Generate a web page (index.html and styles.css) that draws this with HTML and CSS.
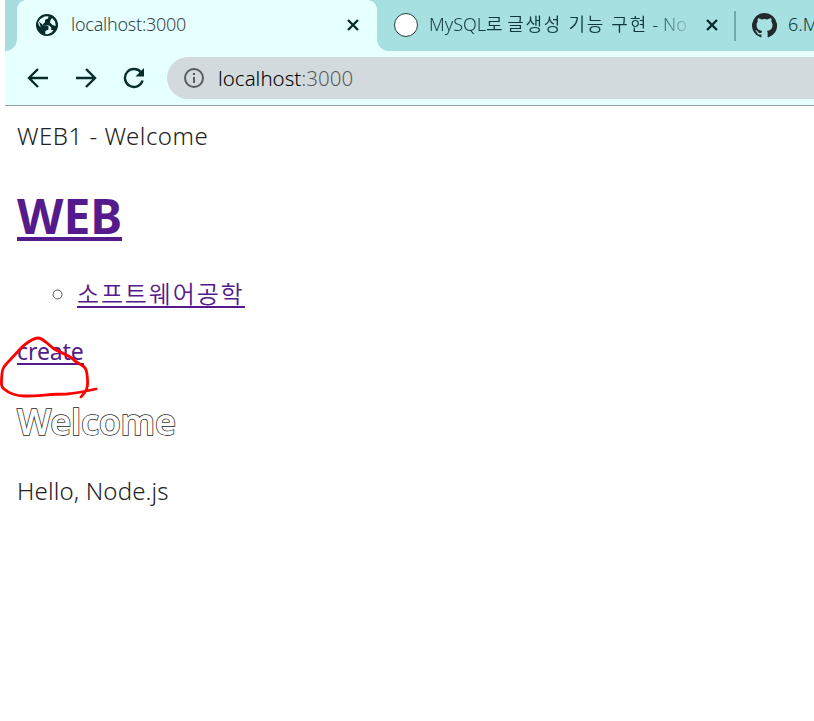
FILE: index.html
```html
<!DOCTYPE html>
<html lang="ko">
<head>
<meta charset="utf-8">
<title>WEB1 - Welcome</title>
<link rel="stylesheet" href="styles.css">
</head>
<body>
<header class="browser">
  <div class="tabs">
    <div class="edge"></div>
    <div class="tab active">
      <svg class="globe" viewBox="0 0 24 24"><circle cx="12" cy="12" r="11" fill="#062c2b"/><path fill="#eaffff" d="M9.500 3.500l4-.3L13 5.500l-3 1.200v2.500L8 11v1.500h6l2.200 2V17h2.300l-2 2.500-4 1.700-2.200-.2v-3l-3-2.500L4 12.500l-1-3 2-3.300zM17 5l3 3.500.8 4.500-3.300-1-2.500-2.500.5-2.300z"/><path fill="#062c2b" d="M4 8.500l4.500 4 1.500-.3 3.500 1.300v3L10.500 18l-4-1z"/></svg>
      <span class="title t1">localhost:3000</span>
      <svg class="close" viewBox="0 0 14 14"><path d="M2 2l10 10M12 2 2 12"/></svg>
    </div>
    <div class="tab second">
      <span class="blank-icon"></span>
      <span class="title t2">MySQL로 <span class="ko">글생성 기능 구현</span> - No</span>
      <svg class="close" viewBox="0 0 14 14"><path d="M2 2l10 10M12 2 2 12"/></svg>
    </div>
    <div class="tab third">
      <svg class="github" viewBox="0 0 16 16"><path d="M8 0a8 8 0 0 0-2.53 15.59c.4.07.55-.17.55-.38v-1.49c-2.01.37-2.53-.49-2.69-.94-.09-.23-.48-.94-.82-1.13-.28-.15-.68-.52-.01-.53.63-.01 1.08.58 1.23.82.72 1.21 1.87.87 2.33.66.07-.52.28-.87.51-1.07-1.78-.2-3.64-.89-3.64-3.95 0-.87.31-1.59.82-2.15-.08-.2-.36-1.02.08-2.12 0 0 .67-.21 2.2.82a7.4 7.4 0 0 1 4 0c1.53-1.04 2.2-.82 2.2-.82.44 1.1.16 1.92.08 2.12.51.56.82 1.27.82 2.15 0 3.07-1.87 3.75-3.65 3.95.29.25.54.73.54 1.48v2.2c0 .21.15.46.55.38A8 8 0 0 0 8 0z"/></svg>
      <span class="title t3">6.M</span>
    </div>
  </div>
  <div class="toolbar">
    <svg class="nav" viewBox="0 0 22 22"><path d="M21 11H2M11 2l-9 9 9 9"/></svg>
    <svg class="nav" viewBox="0 0 22 22"><path d="M1 11h19M11 2l9 9-9 9"/></svg>
    <svg class="nav" viewBox="0 0 22 22"><path d="M18.5 6A9 9 0 1 0 19.6 13.5"/><path class="solid" d="M21 1v8.5h-8.500z"/></svg>
    <div class="address">
      <svg class="info" viewBox="0 0 22 22"><circle cx="11" cy="11" r="9"/><path d="M11 10v6M11 6v2"/></svg>
      <span class="url">localhost<span class="port">:3000</span></span>
    </div>
  </div>
</header>
<main class="page">
  <p class="line intro">WEB1 - Welcome</p>
  <h1><a href="#">WEB</a></h1>
  <ul><li><a href="#">소프트웨어공학</a></li></ul>
  <p class="line create"><a href="#">create</a></p>
  <h2>Welcome</h2>
  <p class="line hello">Hello, Node.js</p>
  <svg class="scribble" viewBox="0 0 100 70"><path d="M81 67C87 61 88 57 87.500 50 87 41 86 38 83 36L75 31C70 25 60 23 53 18 46 13 43 8 38 8 32 8 27 13 22 17L10 30C4 36 2 39 2 44 1 54 1 57 4 59 10 64 15 66 24 66 40 66 50 64 67 64 78 63 87 61 96 59"/></svg>
</main>
</body>
</html>
```
FILE: styles.css
```css
* { box-sizing: border-box; }
body {
  margin: 0;
  width: 814px;
  height: 721px;
  overflow: hidden;
  background: #fff;
  font-family: "Noto Sans", "Noto Sans CJK KR", sans-serif;
  color: #000;
}
svg { display: block; flex: none; }
.browser {
  height: 106px;
  margin-left: 5px;
  background: #e6ffff;
  border-bottom: 1px solid #929e9e;
}
.tabs { display: flex; height: 51px; overflow: hidden; }
.edge {
  width: 12px;
  flex: none;
  background: #a6dcdd;
  border-bottom-right-radius: 12px;
}
.tab { display: flex; align-items: center; flex: none; }
.active {
  width: 360px;
  padding: 0 17px 0 18px;
  position: relative;
  background: #e6ffff;
}
.active::before, .active::after {
  content: "";
  position: absolute;
  top: 0;
  width: 9px;
  height: 9px;
}
.active::before { left: 0; background: radial-gradient(circle at 100% 100%, #e6ffff 8.500px, #a6dcdd 9px); }
.active::after { right: 0; background: radial-gradient(circle at 0 100%, #e6ffff 8.500px, #a6dcdd 9px); }
.second {
  width: 359px;
  padding: 0 16px 0 17px;
  background: #a6e0e0;
  border-bottom-left-radius: 12px;
  position: relative;
}
.second::after {
  content: "";
  position: absolute;
  right: 0;
  top: 11px;
  width: 2px;
  height: 30px;
  background: #74a9a5;
}
.third { width: 100px; padding-left: 16px; background: #a6e0e0; }
.globe { width: 24px; height: 24px; margin-top: -2px; }
.github { width: 25px; height: 25px; margin-top: -1px; fill: #22282c; }
.blank-icon {
  width: 24px;
  height: 24px;
  flex: none;
  margin-top: -1px;
  border: 1px solid #243c3c;
  border-radius: 50%;
  background: #fff;
}
.title {
  margin-top: -2px;
  font-size: 18px;
  line-height: 25px;
  white-space: nowrap;
  overflow: hidden;
  color: #12393a;
  font-weight: 350;
}
.t1 { margin-left: 12px; letter-spacing: -.25px; color: #334647; }
.t2 {
  width: 264px;
  margin-left: 11px;
  -webkit-mask-image: linear-gradient(90deg, #000 225px, transparent 267px);
  mask-image: linear-gradient(90deg, #000 225px, transparent 267px);
}
.ko { letter-spacing: 1.700px; }
.t3 { margin-left: 11px; }
.close { width: 14px; height: 14px; margin-left: auto; margin-top: -1px; fill: none; stroke: #062c2b; stroke-width: 2.400; }
.second .close { margin-right: 1px; }
.toolbar { display: flex; align-items: center; height: 54px; padding-left: 22px; overflow: hidden; }
.nav { width: 22px; height: 22px; margin-right: 26px; fill: none; stroke: #062c2b; stroke-width: 2.400; }
.nav .solid { fill: #062c2b; stroke: none; }
.address {
  display: flex;
  align-items: center;
  width: 660px;
  height: 42px;
  flex: none;
  margin-left: -4px;
  padding-left: 16px;
  background: #d3dadd;
  border-radius: 21px 0 0 21px;
}
.info { width: 22px; height: 22px; fill: none; stroke: #5a5a60; stroke-width: 2; }
.url { margin-left: 13px; font-size: 20.500px; font-weight: 350; }
.port { color: #5c5c60; }
.page { position: relative; padding-left: 17px; height: 615px; }
.line, h1, h2, ul { margin: 0; }
.line, ul { font-size: 24px; line-height: 32px; }
a { color: #551a8b; text-decoration: none; display: inline-block; border-bottom: 2px solid #551a8b; }
.intro, .hello { font-weight: 300; color: #222; }
.intro { padding-top: 14px; letter-spacing: .5px; }
h1 { padding-top: 32px; font-size: 48px; line-height: 64px; }
h1 a { line-height: 50px; height: 57px; padding-top: 7px; border-bottom-width: 4px; vertical-align: top; }
ul { padding: 30px 0 0 60px; list-style: circle; }
li::marker { color: #555; }
li a { letter-spacing: 1.850px; line-height: 32px; height: 30px; vertical-align: top; font-weight: 350; }
.create { padding-top: 26px; }
.create a { font-size: 23px; line-height: 31px; height: 29px; letter-spacing: -.1px; vertical-align: top; }
h2 {
  padding-top: 30px;
  font-size: 36px;
  line-height: 48px;
  font-weight: 600;
  letter-spacing: -.3px;
  color: #fff;
  -webkit-text-stroke: 1.500px #222;
  paint-order: stroke fill;
}
.hello { padding-top: 29px; letter-spacing: .15px; }
.scribble {
  position: absolute;
  left: 0;
  top: 224px;
  width: 100px;
  height: 70px;
  fill: none;
  stroke: #f00;
  stroke-width: 2.800;
  stroke-linecap: round;
  stroke-linejoin: round;
}
```
